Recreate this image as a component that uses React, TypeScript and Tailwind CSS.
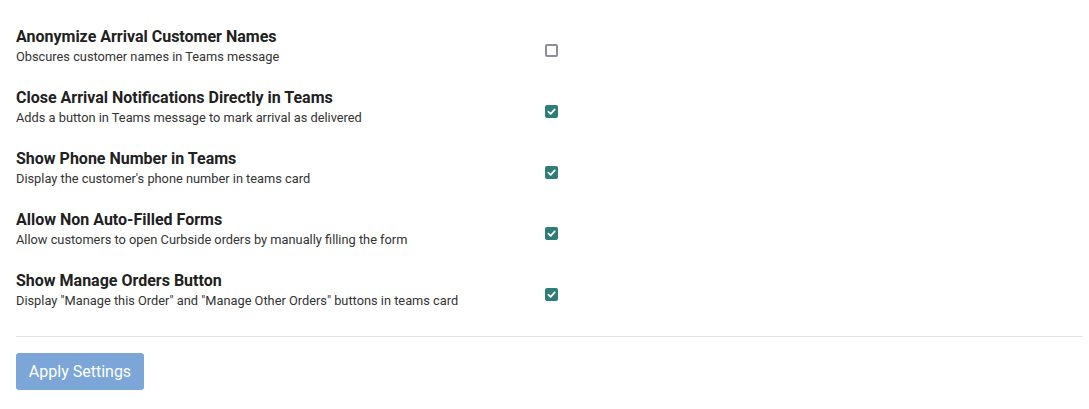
import { useState } from "react";

const settings = [
  {
    title: "Anonymize Arrival Customer Names",
    desc: "Obscures customer names in Teams message",
    on: false,
  },
  {
    title: "Close Arrival Notifications Directly in Teams",
    desc: "Adds a button in Teams message to mark arrival as delivered",
    on: true,
  },
  {
    title: "Show Phone Number in Teams",
    desc: "Display the customer's phone number in teams card",
    on: true,
  },
  {
    title: "Allow Non Auto-Filled Forms",
    desc: "Allow customers to open Curbside orders by manually filling the form",
    on: true,
  },
  {
    title: "Show Manage Orders Button",
    desc: 'Display "Manage this Order" and "Manage Other Orders" buttons in teams card',
    on: true,
  },
];

function Checkbox({ checked, onChange }: { checked: boolean; onChange: () => void }) {
  return (
    <button
      type="button"
      onClick={onChange}
      className={
        checked
          ? "w-[13px] h-[13px] rounded-[2px] bg-[#2e7d77] flex items-center justify-center"
          : "w-[13px] h-[13px] rounded-[2px] border-2 border-[#8e8d9a] bg-white"
      }
    >
      {checked && (
        <svg width="9" height="9" viewBox="0 0 10 10" fill="none">
          <path d="M1.5 5.2 L4 7.6 L8.6 2.6" stroke="white" strokeWidth="1.9" strokeLinecap="round" strokeLinejoin="round" />
        </svg>
      )}
    </button>
  );
}

export default function App() {
  const [values, setValues] = useState(settings.map((s) => s.on));

  return (
    <div className="bg-white w-[1089px] h-[409px] pl-4 pr-[6px] pt-[17px] font-['Roboto',sans-serif]">
      {settings.map((s, i) => (
        <div key={s.title} className="flex items-center pt-[10px] pb-[11px]">
          <div className="w-[529px]">
            <div className="text-[16px] leading-[20px] font-bold text-[#212121]">{s.title}</div>
            <div className="text-[12.8px] leading-[20px] text-[#333]">{s.desc}</div>
          </div>
          <div className="mt-[6px]">
            <Checkbox
              checked={values[i]}
              onChange={() => setValues(values.map((v, j) => (j === i ? !v : v)))}
            />
          </div>
        </div>
      ))}
      <div className="mt-[14px] border-t border-[#e3e3e3]" />
      <button
        type="button"
        disabled
        className="mt-4 h-[37px] w-[128px] rounded-[3px] bg-[#7ba6d7] text-white text-[16px]"
      >
        Apply Settings
      </button>
    </div>
  );
}
